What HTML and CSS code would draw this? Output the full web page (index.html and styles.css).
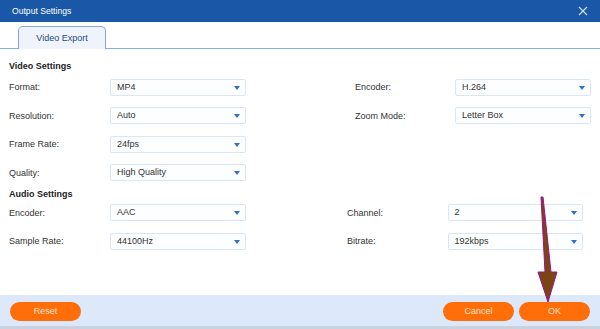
FILE: index.html
```html
<!DOCTYPE html>
<html lang="en">
<head>
  <meta charset="UTF-8">
  <title>Output Settings</title>
  <link rel="stylesheet" href="styles.css">
</head>
<body>
  <div class="dialog">
    <div class="titlebar">
      <span>Output Settings</span>
      <svg class="close" viewBox="0 0 10 10"><path d="M1 1 L9 9 M9 1 L1 9" stroke="#cfe0f7" stroke-width="1.1"/></svg>
    </div>

    <div class="tabs">
      <div class="tab">Video Export</div>
    </div>

    <div class="content">
      <h2>Video Settings</h2>
      <div class="grid video">
        <div class="field"><label>Format:</label><div class="select">MP4</div></div>
        <div class="field right"><label>Encoder:</label><div class="select">H.264</div></div>
        <div class="field"><label>Resolution:</label><div class="select">Auto</div></div>
        <div class="field right"><label>Zoom Mode:</label><div class="select">Letter Box</div></div>
        <div class="field"><label>Frame Rate:</label><div class="select">24fps</div></div>
        <div class="field"></div>
        <div class="field"><label>Quality:</label><div class="select">High Quality</div></div>
      </div>

      <h2 class="audio-title">Audio Settings</h2>
      <div class="grid audio">
        <div class="field"><label>Encoder:</label><div class="select">AAC</div></div>
        <div class="field right"><label>Channel:</label><div class="select">2</div></div>
        <div class="field"><label>Sample Rate:</label><div class="select">44100Hz</div></div>
        <div class="field right"><label>Bitrate:</label><div class="select">192kbps</div></div>
      </div>
    </div>

    <div class="footer">
      <button class="btn">Reset</button>
      <div class="actions">
        <button class="btn">Cancel</button>
        <button class="btn">OK</button>
      </div>
    </div>

    <!-- annotation arrow -->
    <svg class="pointer" viewBox="0 0 600 329">
      <polygon points="541,197 543,197 551,272 557,272 548,302 538,272 545,272" fill="#7a4511" stroke="#9a0f9a" stroke-width="1"/>
    </svg>
  </div>
</body>
</html>
```

FILE: styles.css
```css
* {
  box-sizing: border-box;
}
body {
  margin: 0;
  width: 600px;
  height: 329px;
  overflow: hidden;
  font-family: "Liberation Sans", Arial, sans-serif;
  font-size: 9px;
  color: #333;
  background: #fff;
}
.dialog {
  position: relative;
  height: 329px;
  display: flex;
  flex-direction: column;
}
.titlebar {
  height: 22px;
  background: #1b57a7;
  color: #fff;
  display: flex;
  align-items: center;
  justify-content: space-between;
  padding: 0 12px 0 12px;
  font-size: 8.6px;
}
.close {
  width: 10px;
  height: 10px;
}
.tabs {
  height: 27px;
  padding: 4px 0 0 18px;
  border-bottom: 1px solid #8cb0e2;
}
.tab {
  width: 88px;
  height: 23px;
  background: #eef3fc;
  border: 1px solid #86a9dc;
  border-bottom: none;
  border-radius: 5px 5px 0 0;
  color: #2c4a7a;
  text-align: center;
  line-height: 22px;
}
.content {
  flex: 1;
  padding: 12px 9px 0 9px;
}
h2 {
  margin: 0;
  font-size: 9px;
  font-weight: bold;
  color: #222;
  line-height: 11px;
}
.grid {
  display: grid;
  grid-template-columns: 346px 236px;
  row-gap: 12.5px;
  margin-top: 7px;
}
.field {
  display: flex;
  align-items: center;
  height: 16px;
}
.field label {
  width: 101px;
}
.video .right label {
  width: 100px;
}
.audio {
  grid-template-columns: 338px 236px;
  margin-top: 5px;
}
.audio .right label {
  width: 101px;
}
.select {
  width: 136px;
  height: 17px;
  border: 1px solid #dbe6f5;
  border-radius: 2px;
  background: #fdfeff;
  padding: 0 6px;
  line-height: 15px;
  position: relative;
  color: #333;
}
.select::after {
  content: "";
  position: absolute;
  right: 5px;
  top: 6px;
  border-left: 3.5px solid transparent;
  border-right: 3.5px solid transparent;
  border-top: 4px solid #2d6fd0;
}
.audio-title {
  margin-top: 8px;
}
.footer {
  height: 34px;
  background: #dde9fa;
  border-bottom: 3px solid #c9d3df;
  display: flex;
  align-items: center;
  justify-content: space-between;
  padding: 1px 10px 0 10px;
}
.actions {
  display: flex;
  gap: 5px;
}
.btn {
  width: 71px;
  height: 19px;
  border: none;
  border-radius: 10px;
  background: #ff6e09;
  color: #fde2cc;
  font-family: "Liberation Sans", Arial, sans-serif;
  font-size: 9px;
  padding: 0;
}
.pointer {
  position: absolute;
  left: 0;
  top: 0;
  width: 600px;
  height: 329px;
  pointer-events: none;
}
```
